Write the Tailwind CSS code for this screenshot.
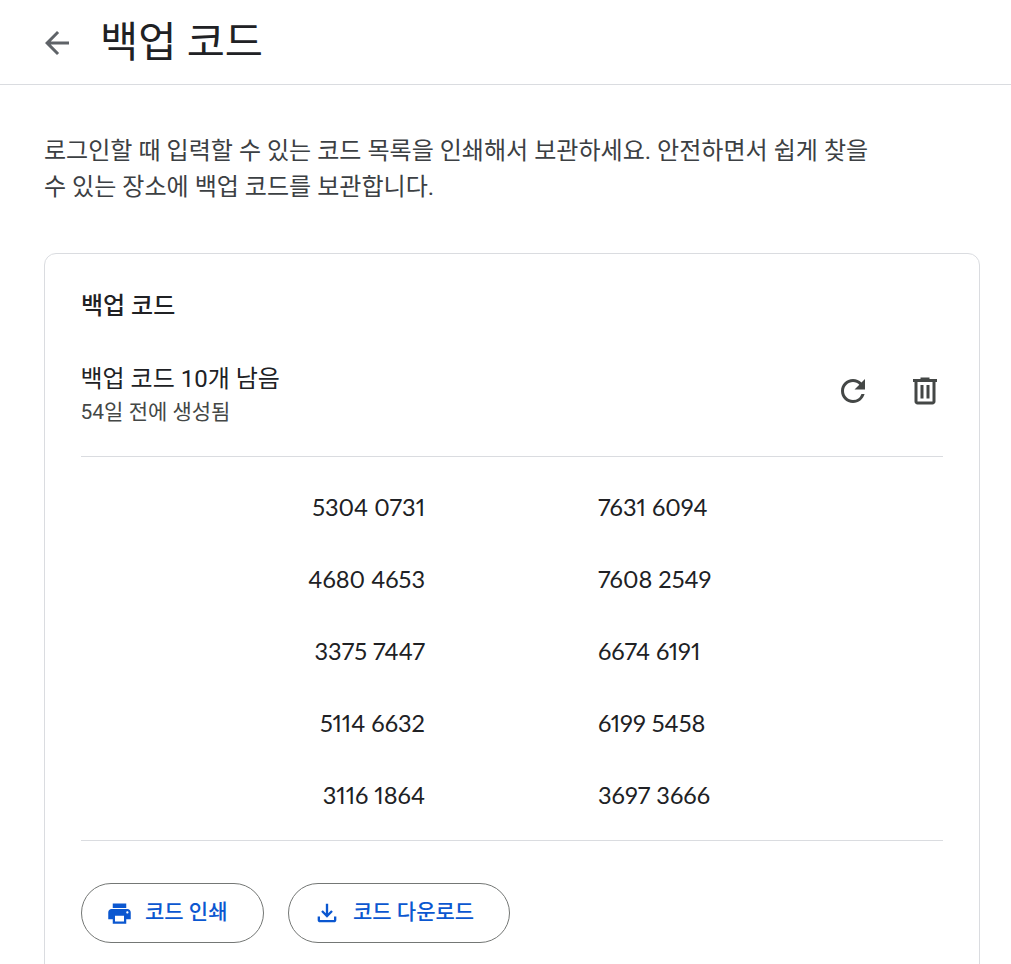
<!DOCTYPE html>
<html lang="ko">
<head>
<meta charset="utf-8">
<script src="https://cdn.jsdelivr.net/npm/@tailwindcss/browser@4"></script>
</head>
<body class="bg-white h-[964px] overflow-hidden font-['Roboto','Noto_Sans_CJK_KR',sans-serif]">
<header class="h-[85px] border-b border-[#dadce0] flex items-center pl-[39px]">
  <svg class="w-[36px] h-[36px] mr-[25px] mt-[1px]" viewBox="0 0 24 24" fill="#5f6368"><path d="M20 11H7.83l5.59-5.59L12 4l-8 8 8 8 1.41-1.41L7.83 13H20v-2z"/></svg>
  <h1 class="text-[41.5px] leading-[48px] text-[#202124] mt-[1px]">백업 코드</h1>
</header>
<main class="px-[44px]">
  <p class="mt-[48px] w-[840px] text-[24.05px] leading-[36px] text-[#3c4043]">로그인할 때 입력할 수 있는 코드 목록을 인쇄해서 보관하세요. 안전하면서 쉽게 찾을 수 있는 장소에 백업 코드를 보관합니다.</p>
  <section class="mt-[48px] w-[936px] h-[800px] border border-[#dadce0] rounded-[12px] px-[36px]">
    <h2 class="mt-[38px] text-[24px] leading-[28px] font-medium text-[#202124]">백업 코드</h2>
    <div class="mt-[44px] h-[93px] flex border-b border-[#dadce0]">
      <div class="flex-1">
        <div class="text-[24px] leading-[30px] text-[#202124] -ml-[0.5px]">백업 코드 10개 남음</div>
        <div class="text-[21px] leading-[24px] text-[#444746] mt-[6px] -ml-[0.5px]">54일 전에 생성됨</div>
      </div>
      <div class="flex gap-[36px] pt-[9px]">
        <svg class="w-[36px] h-[36px]" viewBox="0 0 24 24" fill="#444746"><path d="M17.65 6.35A7.958 7.958 0 0 0 12 4c-4.42 0-7.99 3.58-7.99 8s3.57 8 7.99 8c3.73 0 6.84-2.55 7.73-6h-2.08A5.99 5.99 0 0 1 12 18c-3.31 0-6-2.69-6-6s2.69-6 6-6c1.66 0 3.14.69 4.22 1.78L13 11h7V4l-2.35 2.35z"/></svg>
        <svg class="w-[36px] h-[36px]" viewBox="0 0 24 24" fill="#444746"><path d="M15 4V3H9v1H4v2h1v13c0 1.1.9 2 2 2h10c1.1 0 2-.9 2-2V6h1V4h-5zm2 15H7V6h10v13zM9 8h2v9H9V8zm4 0h2v9h-2V8z"/></svg>
      </div>
    </div>
    <div class="h-[384px] border-b border-[#dadce0] pt-[14px] grid grid-cols-[344px_1fr] gap-x-[173px] auto-rows-[72px] text-[23.6px] leading-[72px] text-[#202124] font-['Lato',sans-serif] proportional-nums content-start">
      <div class="text-right">5304 0731</div><div>7631 6094</div>
      <div class="text-right">4680 4653</div><div>7608 2549</div>
      <div class="text-right">3375 7447</div><div>6674 6191</div>
      <div class="text-right">5114 6632</div><div>6199 5458</div>
      <div class="text-right">3116 1864</div><div>3697 3666</div>
    </div>
    <div class="mt-[42px] flex gap-[24px]">
      <button class="w-[183px] h-[60px] rounded-full border border-[#747775] flex items-center pl-[24px] gap-[12px] text-[21px] font-medium text-[#0b57d0]">
        <svg class="w-[27px] h-[27px]" viewBox="0 0 24 24" fill="#0b57d0"><path d="M19 8H5c-1.66 0-3 1.34-3 3v6h4v4h12v-4h4v-6c0-1.66-1.34-3-3-3zm-3 11H8v-5h8v5zm3-7c-.55 0-1-.45-1-1s.45-1 1-1 1 .45 1 1-.45 1-1 1zm-1-9H6v4h12V3z"/></svg>
        코드 인쇄
      </button>
      <button class="w-[222px] h-[60px] rounded-full border border-[#747775] flex items-center pl-[24px] gap-[12px] text-[21px] font-medium text-[#0b57d0]">
        <svg class="w-[28px] h-[28px]" viewBox="0 0 24 24" fill="#0b57d0"><path d="M12 16l-5-5 1.41-1.41L11 12.17V4h2v8.17l2.59-2.58L17 11l-5 5zM6 20c-.55 0-1.02-.2-1.41-.59A1.93 1.93 0 0 1 4 18v-3h2v3h12v-3h2v3c0 .55-.2 1.02-.59 1.41-.39.39-.86.59-1.41.59H6z"/></svg>
        코드 다운로드
      </button>
    </div>
  </section>
</main>
</body>
</html>
